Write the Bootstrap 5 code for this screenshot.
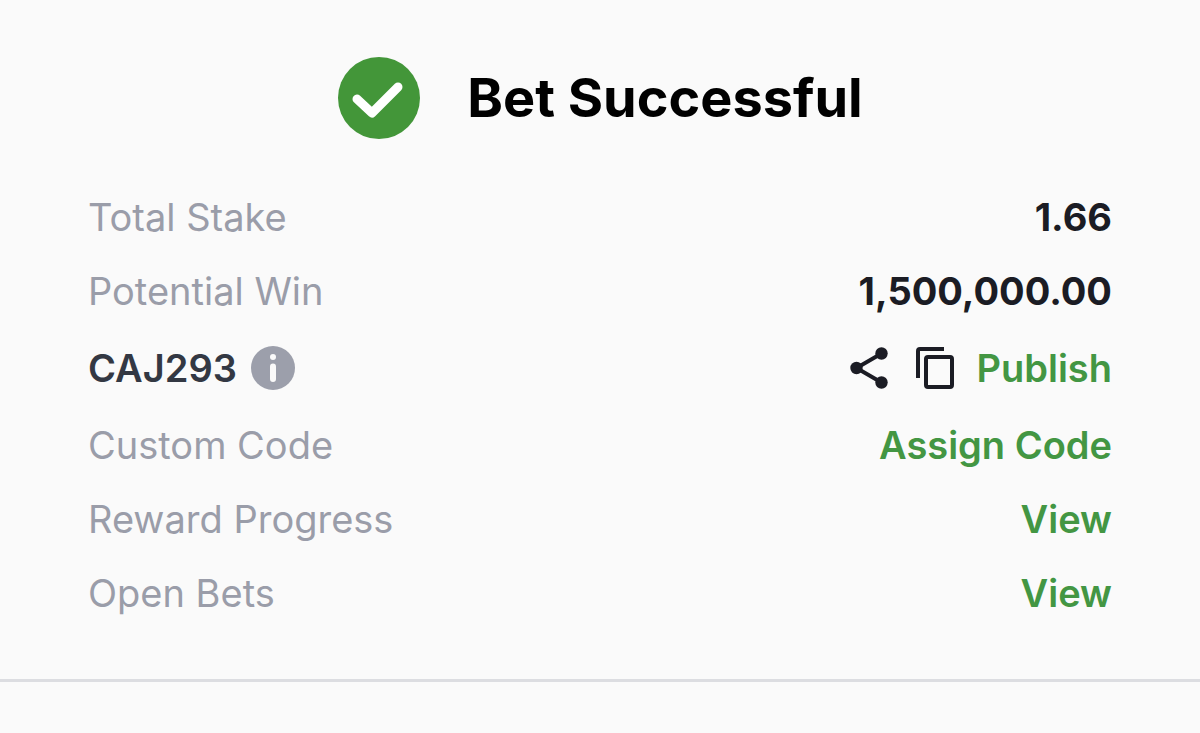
<!DOCTYPE html>
<html lang="en">
<head>
<meta charset="utf-8">
<meta name="viewport" content="width=device-width, initial-scale=1">
<title>Bet Successful</title>
<link href="https://cdn.jsdelivr.net/npm/bootstrap@5.3.0/dist/css/bootstrap.min.css" rel="stylesheet">
<style>
  body { background: #fafafa; font-family: Inter, sans-serif; font-size: 38px; line-height: 46px; }
  .receipt { padding: 56px 88px 63px; border-bottom: 3px solid #dcdde1; }
  .receipt-head { gap: 46px; margin-bottom: 54px; }
  .receipt-title { font-size: 54px; line-height: 84px; font-weight: 700; color: #000; }
  .receipt-rows { gap: 28px; }
  .label-text { color: #9a9da9; font-weight: 400; }
  .value-text { color: #1b1c24; font-weight: 700; }
  .code-text { color: #333843; font-weight: 600; }
  .action, .action.btn { color: #439643; font-size: 38px; font-weight: 600; line-height: 46px; }
  .action:hover { color: #2f7a2c; }
  .icon-btn { line-height: 0; color: #1b1c24; }
  .code-row { padding: 3px 0; }
  .code-group { gap: 14px; }
  .code-actions { column-gap: 22px; }
  .share-btn { margin-right: 6px; }
</style>
</head>
<body>
<main class="receipt">
  <header class="receipt-head d-flex justify-content-center align-items-center">
    <svg width="84" height="84" viewBox="0 0 84 84" aria-hidden="true"><circle cx="42" cy="42" r="41" fill="#439639"/><path d="M20 43L35 57L61 31" fill="none" stroke="#fff" stroke-width="9" stroke-linecap="round" stroke-linejoin="round"/></svg>
    <h1 class="receipt-title m-0">Bet Successful</h1>
  </header>
  <div class="receipt-rows d-flex flex-column">
    <div class="d-flex justify-content-between"><span class="label-text">Total Stake</span><span class="value-text">1.66</span></div>
    <div class="d-flex justify-content-between"><span class="label-text">Potential Win</span><span class="value-text">1,500,000.00</span></div>
    <div class="code-row d-flex justify-content-between align-items-center">
      <div class="code-group d-flex align-items-center">
        <span class="code-text">CAJ293</span>
        <button type="button" class="btn icon-btn p-0 border-0" aria-label="About this code">
          <svg width="44" height="44" viewBox="0 0 44 44" aria-hidden="true"><circle cx="22" cy="22" r="22" fill="#9c9fab"/><circle cx="22" cy="11" r="3" fill="#fafafa"/><path d="M22 20.500V33" stroke="#fafafa" stroke-width="6" stroke-linecap="round"/></svg>
        </button>
      </div>
      <div class="code-actions d-flex align-items-center">
        <button type="button" class="btn icon-btn share-btn p-0 border-0" aria-label="Share">
          <svg width="38" height="42" viewBox="0 0 38 42" aria-hidden="true"><path d="M31.500 6.500L6.500 21L31.500 35.500" fill="none" stroke="currentColor" stroke-width="4"/><g fill="currentColor"><circle cx="31.500" cy="6.500" r="6.200"/><circle cx="6.500" cy="21" r="6.200"/><circle cx="31.500" cy="35.500" r="6.200"/></g></svg>
        </button>
        <button type="button" class="btn icon-btn p-0 border-0" aria-label="Copy code">
          <svg width="38" height="42" viewBox="0 0 38 42" aria-hidden="true"><g fill="none" stroke="currentColor" stroke-width="4"><path d="M2 31V4Q2 2 4 2H28"/><rect x="10" y="10" width="26" height="30" rx="2"/></g></svg>
        </button>
        <button type="button" class="btn action p-0 border-0">Publish</button>
      </div>
    </div>
    <div class="d-flex justify-content-between"><span class="label-text">Custom Code</span><a href="#" class="action text-decoration-none">Assign Code</a></div>
    <div class="d-flex justify-content-between"><span class="label-text">Reward Progress</span><a href="#" class="action text-decoration-none">View</a></div>
    <div class="d-flex justify-content-between"><span class="label-text">Open Bets</span><a href="#" class="action text-decoration-none">View</a></div>
  </div>
</main>
<script src="https://cdn.jsdelivr.net/npm/bootstrap@5.3.0/dist/js/bootstrap.bundle.min.js"></script>
</body>
</html>
